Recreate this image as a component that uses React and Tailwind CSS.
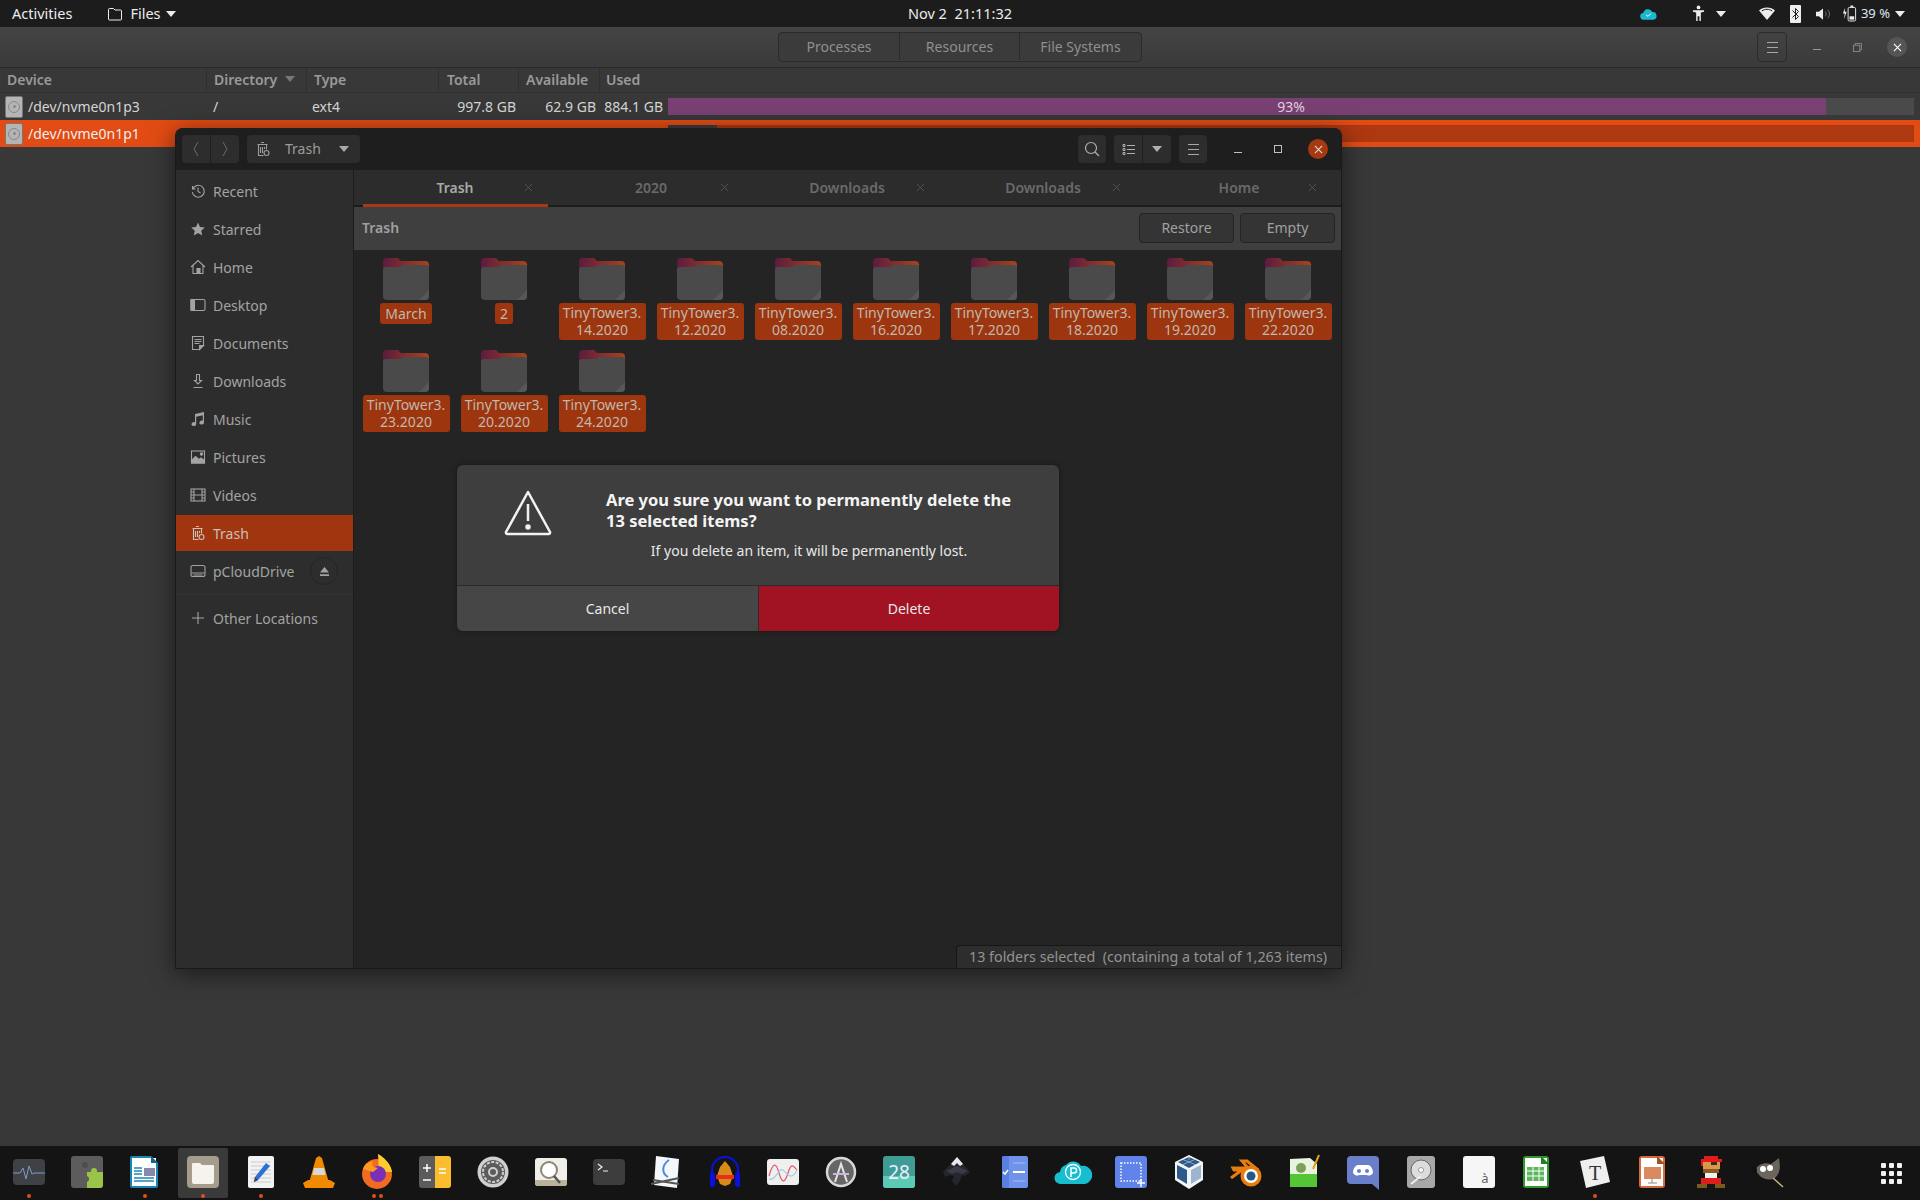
import { Fragment } from "react";

const tabs = ["Trash", "2020", "Downloads", "Downloads", "Home"];

const folders = [
  ["March"],
  ["2"],
  ["TinyTower3.", "14.2020"],
  ["TinyTower3.", "12.2020"],
  ["TinyTower3.", "08.2020"],
  ["TinyTower3.", "16.2020"],
  ["TinyTower3.", "17.2020"],
  ["TinyTower3.", "18.2020"],
  ["TinyTower3.", "19.2020"],
  ["TinyTower3.", "22.2020"],
  ["TinyTower3.", "23.2020"],
  ["TinyTower3.", "20.2020"],
  ["TinyTower3.", "24.2020"],
];

// small 16px symbolic icon
const Sym = ({ children, className = "", fill = "none" }) => (
  <svg
    viewBox="0 0 16 16"
    fill={fill}
    stroke={fill === "none" ? "currentColor" : "none"}
    strokeWidth="1.1"
    className={`w-4 h-4 shrink-0 ${className}`}
  >
    {children}
  </svg>
);

const TrashIcon = ({ className }) => (
  <Sym className={className}>
    <path d="M6 1.500h3M2.500 3.500h10M3.500 3.500v11h5M11.500 3.500v5M5.500 6v6M7.500 6v6M9.500 6v2" />
    <circle cx="11.500" cy="12" r="2.500" />
  </Sym>
);

const sidebarItems = [
  { label: "Recent", icon: <Sym><path d="M2.500 3v3h3M2.700 6a6 6 0 1 1-.4 3" /><path d="M8 4.500V8.500l2.500 1.500" /></Sym> },
  { label: "Starred", icon: <Sym fill="currentColor"><path d="M8 1.500l2 4.500 4.800.5-3.600 3.200 1 4.800L8 12l-4.200 2.500 1-4.800L1.200 6.500 6 6z" /></Sym> },
  { label: "Home", icon: <Sym><path d="M1 8l7-6.500L15 8M3 6.500V14.500h10V6.500" /><path d="M7 14.500V9.500h3v5" fill="currentColor" /></Sym> },
  { label: "Desktop", icon: <Sym><rect x="1" y="2.500" width="14" height="11" rx="1.500" /><rect x="1" y="2.500" width="3.500" height="11" fill="currentColor" /></Sym> },
  { label: "Documents", icon: <Sym><path d="M2.500 1.500h11v9l-4 4h-7zM4.500 4.500h7M4.500 6.500h7M4.500 8.500h5" /><path d="M9.500 14.500v-4h4z" fill="currentColor" /></Sym> },
  { label: "Downloads", icon: <Sym><path d="M6.500 1.500h3v6h2L8 11 4.500 7.500h2zM3.500 14.500h9" /></Sym> },
  { label: "Music", icon: <Sym fill="currentColor"><path d="M5 3l9-2v10.500a2.300 2 0 1 1-1.200-1.700V4.300L6.200 5.700V13a2.300 2 0 1 1-1.200-1.700z" /></Sym> },
  { label: "Pictures", icon: <Sym><rect x="1.500" y="2" width="13" height="12" /><path d="M1.500 14V11.500l4-4 3.500 3 2-1.500 3.500 2.500V14z" fill="currentColor" /><circle cx="11.500" cy="5" r="1.200" fill="currentColor" /></Sym> },
  { label: "Videos", icon: <Sym><rect x="1" y="2" width="14" height="12" /><path d="M4 2v12M12 2v12M1 5h3M1 8h3M1 11h3M12 5h3M12 8h3M12 11h3M4 8h8" /></Sym> },
  { label: "Trash", active: true, icon: <TrashIcon /> },
  { label: "pCloudDrive", eject: true, icon: <Sym><rect x="1" y="2.500" width="14" height="11" rx="2" /><path d="M1.500 10h13M3.500 12h9" /></Sym> },
];

const Icon32 = ({ children, className = "" }) => (
  <svg viewBox="0 0 32 32" className={`w-8 h-8 ${className}`}>
    {children}
  </svg>
);

const dockIcons = [
  { dots: 1, svg: <><rect x="0" y="3" width="32" height="26" rx="4" fill="#3f4145" /><path d="M0 17h7l3-5 3 11 3-13 3 8 2-1h11" fill="none" stroke="#7f9cc9" strokeWidth="1" /></> },
  { dots: 0, svg: <><rect x="0" width="32" height="32" rx="3" fill="#5c5c5c" /><path d="M16 16h16v13a3 3 0 0 1-3 3H16z" fill="#9ac34a" /><circle cx="23" cy="15" r="3" fill="#9ac34a" /><circle cx="15" cy="23" r="3" fill="#5c5c5c" /><circle cx="14" cy="9" r="3" fill="#4d4d4d" /></> },
  { dots: 1, svg: <><path d="M3 0h19l7 7v23a2 2 0 0 1-2 2H3a2 2 0 0 1-2-2V2a2 2 0 0 1 2-2z" fill="#1a86b8" /><rect x="3" y="2" width="24" height="28" fill="#fff" /><path d="M22 0l7 7h-7z" fill="#14658c" /><rect x="15" y="12" width="11" height="8" fill="#88a" /><path d="M5 12h8M5 15h8M5 18h8M5 22h20M5 25h20" stroke="#1a86b8" strokeWidth="1.500" /></> },
  { dots: 1, active: true, svg: <><rect width="32" height="32" rx="4" fill="#a59c8b" /><path d="M5 8a1 1 0 0 1 1-1h7l2 2h11a1 1 0 0 1 1 1v16a2 2 0 0 1-2 2H7a2 2 0 0 1-2-2z" fill="#f6f3ee" /></> },
  { dots: 1, svg: <><rect x="3" width="26" height="32" rx="2" fill="#f2f2f2" /><path d="M6 6h20M6 10h20M6 14h20M6 18h20M6 22h20M6 26h20" stroke="#ccc" /><path d="M9 26l1-5L21 7l4 3-12 14z" fill="#2e6fd8" /><path d="M9 26l1-5 3 3z" fill="#444" /></> },
  { dots: 0, svg: <><path d="M16 0l3 2 7 25H6L13 2z" fill="#f08a00" /><path d="M11 12h10l1.500 7h-13z" fill="#d8d8d8" /><path d="M0 27l5-3h22l5 3-2 5H2z" fill="#f08a00" /></> },
  { dots: 2, svg: <><circle cx="16" cy="18" r="15" fill="#f26b21" /><path d="M17-2c6 3 13 10 14 18H18z" fill="#ffcb2e" /><circle cx="17" cy="18" r="8" fill="#7b2fb8" /><path d="M2 13c2-6 7-8 10-7-2 3-1 5 5 6l-5 4z" fill="#ff9a1f" /></> },
  { dots: 0, svg: <><path d="M3 0h13v32H3a3 3 0 0 1-3-3V3a3 3 0 0 1 3-3z" fill="#5b5b5b" /><path d="M16 0h13a3 3 0 0 1 3 3v26a3 3 0 0 1-3 3H16z" fill="#fbbd2e" /><path d="M4 12h8M8 8v8M4 24h8M20 13h7M20 17h7" stroke="#fff" strokeWidth="1.500" /></> },
  { dots: 0, svg: <><circle cx="16" cy="16" r="15.500" fill="#cfcfcf" /><circle cx="16" cy="16" r="12" fill="#5b5b5b" /><circle cx="16" cy="16" r="10" fill="none" stroke="#cfcfcf" strokeWidth="2" strokeDasharray="3 1.500" /><circle cx="16" cy="16" r="4" fill="none" stroke="#cfcfcf" strokeWidth="2" /></> },
  { dots: 0, svg: <><rect y="2" width="32" height="28" rx="3" fill="#f0eee8" /><path d="M0 24h32v3a3 3 0 0 1-3 3H3a3 3 0 0 1-3-3z" fill="#b9b39d" /><circle cx="14" cy="14" r="8" fill="#fff" stroke="#8a8578" strokeWidth="2" /><path d="M19 20l6 7" stroke="#555" strokeWidth="2.500" /></> },
  { dots: 0, svg: <><rect y="3" width="32" height="26" rx="4" fill="#3d3d3d" /><path d="M5 8l4 3-4 3M10 15h5" fill="none" stroke="#eee" strokeWidth="1.200" /></> },
  { dots: 0, svg: <><path d="M5 0l23 3-2 29-23-3z" fill="#f3f6fa" /><path d="M18 4c-7 5-8 13-1 17" fill="none" stroke="#4b8bd6" strokeWidth="2" /><path d="M0 28l28-6M2 24l26 4" stroke="#555" strokeWidth="2" /></> },
  { dots: 0, svg: <><path d="M3 22V14a13 13 0 0 1 26 0v8" fill="none" stroke="#0a10e0" strokeWidth="2" /><rect x="1" y="16" width="5" height="15" rx="2.500" fill="#0a10e0" /><rect x="26" y="16" width="5" height="15" rx="2.500" fill="#0a10e0" /><path d="M8 20l3-9 5-6 5 6 3 9-3 8-5 2-5-2z" fill="#d98b1a" /><path d="M7 19h18v4H7z" fill="#e83018" /></> },
  { dots: 0, svg: <><rect y="3" width="32" height="26" rx="3" fill="#efefef" /><path d="M2 20c4-14 7-14 10-3s6 10 9 0 5-8 9-3" fill="none" stroke="#e25a6a" strokeWidth="1.200" /><path d="M2 23c6 3 10-12 14-9s8 12 14 0" fill="none" stroke="#a7cbe8" strokeWidth="1.200" /></> },
  { dots: 0, svg: <><circle cx="16" cy="16" r="14" fill="#666" stroke="#d8d8d8" strokeWidth="2.500" /><path d="M10 26l6-18 6 18M8 18h16" fill="none" stroke="#e4e4e4" strokeWidth="2" /><path d="M8 18h16" stroke="#c6a6d8" strokeWidth="1.500" /></> },
  { dots: 0, svg: <><rect width="32" height="32" rx="3" fill="#3f9c94" /><path d="M0 20h32v9a3 3 0 0 1-3 3H3a3 3 0 0 1-3-3z" fill="#5bc9b3" /><text x="16" y="23" textAnchor="middle" fontSize="19" fill="#eef" fontFamily="Noto Sans">28</text></> },
  { dots: 0, svg: <><path d="M16 1l13 15-5 4-3-1-2 6-4 5-4-5 2-5-4-1-5 2-2-5z" fill="#25252e" /><path d="M16 1l6 7-3 2-3-3-3 3-3-2z" fill="#e8e8f0" /><path d="M5 15l11-5 11 5-6 3-5-2-5 2z" fill="#3a3a48" /></> },
  { dots: 0, svg: <><rect x="3" width="26" height="32" rx="2" fill="#6f93ea" /><rect x="3" width="7" height="32" rx="2" fill="#5a7fe0" /><path d="M14 7h12M14 25h12" stroke="#97b0ef" strokeWidth="1.500" /><path d="M14 16h12" stroke="#fff" strokeWidth="2" /><path d="M4 16l2 2 3-4" fill="none" stroke="#fff" strokeWidth="1.500" /></> },
  { dots: 0, svg: <><path d="M4 28a6 6 0 0 1-1-12 8 8 0 0 1 6-7 9 9 0 0 1 15 1 7 7 0 0 1 4 18z" fill="#17bed0" /><circle cx="16" cy="16" r="7.500" fill="none" stroke="#fff" strokeWidth="1.300" /><path d="M14 21V12h3a2 2 0 0 1 0 5h-3" fill="none" stroke="#fff" strokeWidth="1.500" /></> },
  { dots: 0, svg: <><rect width="32" height="32" rx="3" fill="#5f83e8" /><rect x="6" y="7" width="20" height="18" fill="none" stroke="#fff" strokeWidth="1.500" strokeDasharray="1.500 1.500" /><path d="M26 23v8M22 27h8" stroke="#fff" strokeWidth="1.500" /></> },
  { dots: 0, svg: <><path d="M16-1l14 7v18l-14 9-14-9V6z" fill="#f2f5f8" /><path d="M16 1L27 6 16 12 5 6z" fill="#2d5a88" /><path d="M4 9l10 5v14L4 22z" fill="#2d5a88" /><path d="M18 14l10-5v13l-10 6z" fill="#9cb4cc" /><path d="M16-1v5M9 3l14 6M23 3L9 9" stroke="#c8d6e4" strokeWidth=".6" /></> },
  { dots: 0, svg: <><path d="M0 22l11-8H3l-1-2h15L11 5h5l11 9" fill="none" stroke="#e87d0d" strokeWidth="3" /><circle cx="20" cy="20" r="10.500" fill="#e87d0d" /><circle cx="20" cy="20" r="7" fill="#fff" /><circle cx="20" cy="20" r="4.500" fill="#265787" /></> },
  { dots: 0, svg: <><path d="M1 3l20-1 7 6v23H1z" fill="#e8f3e0" /><path d="M1 18h27v13H1z" fill="#54c535" /><circle cx="12" cy="12" r="5" fill="#7ca05a" /><path d="M24 13L30-1" stroke="#e0a020" strokeWidth="2" /></> },
  { dots: 0, svg: <><path d="M4 0h24a4 4 0 0 1 4 4v30l-7-6H4a4 4 0 0 1-4-4V4a4 4 0 0 1 4-4z" fill="#6a7fc9" /><path d="M6 17c0-5 3-8 5-8h10c2 0 5 3 5 8-2 3-5 3-6 2H12c-1 1-4 1-6-2z" fill="#fff" /><circle cx="12" cy="15" r="2" fill="#6a7fc9" /><circle cx="20" cy="15" r="2" fill="#6a7fc9" /></> },
  { dots: 0, svg: <><rect x="2" width="28" height="32" rx="3" fill="#a8a8a8" /><circle cx="16" cy="14" r="10" fill="#dcdcdc" stroke="#666" /><circle cx="16" cy="14" r="2.500" fill="#fff" stroke="#999" /><path d="M6 28l10-8" stroke="#eee" strokeWidth="2" /></> },
  { dots: 0, svg: <><rect width="32" height="32" rx="3" fill="#f6f6f6" /><text x="22" y="27" textAnchor="middle" fontSize="13" fill="#666" fontFamily="Noto Sans">à</text></> },
  { dots: 0, svg: <><rect x="2" width="26" height="32" rx="3" fill="#2b9b2b" /><rect x="4" y="2" width="22" height="28" fill="#fff" /><path d="M20 0l8 8h-8z" fill="#237d23" /><rect x="6" y="11" width="17" height="14" fill="#5cb85c" /><path d="M6 15h17M6 20h17M12 11v14M18 11v14" stroke="#fff" /></> },
  { dots: 1, svg: <><path d="M1 5l24-5 6 26-24 6z" fill="#efefef" /><text x="16" y="24" textAnchor="middle" fontSize="20" fill="#333" fontFamily="Liberation Serif">T</text></> },
  { dots: 0, svg: <><rect x="2" width="26" height="32" rx="3" fill="#d8693b" /><rect x="4" y="2" width="22" height="28" fill="#fff" /><path d="M20 0l8 8h-8z" fill="#a84e22" /><rect x="7" y="11" width="17" height="12" fill="#d98a5e" /><path d="M15 23v4M11 27h9" stroke="#888" /></> },
  { dots: 0, svg: <><path d="M9 0h14v3h4v3H8v4H6V3h3z" fill="#e01c1c" /><path d="M8 6h17v7H8z" fill="#d79a4a" /><path d="M16 6h6v3h-6z" fill="#4a2a10" /><path d="M8 13h16v4H8z" fill="#8a5a20" /><path d="M10 17h12v5H10z" fill="#f0f0f0" /><path d="M6 22h20v6H6z" fill="#e01c1c" /><path d="M2 28h10v4H2zM20 28h10v4H20z" fill="#7a5a1e" /></> },
  { dots: 0, svg: <><path d="M2 14c3-6 10-8 16-6l8-6c1 6 2 14-3 19-4 4-12 3-16-1z" fill="#6a665c" /><circle cx="10" cy="13" r="3" fill="#fff" /><circle cx="17" cy="12" r="3" fill="#fff" /><circle cx="1" cy="14" r="3" fill="#111" /><path d="M20 22l10 9" stroke="#c9b27a" strokeWidth="1.500" /></> },
];

const FolderIcon = () => (
  <svg viewBox="0 0 46 42" className="w-[46px] h-[42px]">
    <defs>
      <linearGradient id="folderTab" x1="0" x2="1" y1="0" y2="0">
        <stop offset="0" stopColor="#5d1b3f" />
        <stop offset="1" stopColor="#a8431c" />
      </linearGradient>
    </defs>
    <path d="M0 4a4 4 0 0 1 4-4h11l3 3h24a4 4 0 0 1 4 4v8H0z" fill="url(#folderTab)" />
    <path d="M0 12a3 3 0 0 1 3-3h14l3-2h23a3 3 0 0 1 3 3v28a4 4 0 0 1-4 4H4a4 4 0 0 1-4-4z" fill="#4a4a4a" />
    <path d="M36 42l10-10v6a4 4 0 0 1-4 4z" fill="#575757" />
  </svg>
);

const Caret = ({ className = "" }) => (
  <svg viewBox="0 0 10 6" fill="currentColor" className={`w-[10px] h-[6px] shrink-0 ${className}`}>
    <path d="M0 0h10L5 6z" />
  </svg>
);

const TopBar = () => (
  <div className="h-[27px] bg-[#1c1c1c] grid grid-cols-[1fr_auto_1fr] items-center text-[14.500px] text-[#ececec]">
    <div className="flex items-center pl-3">
      <span>Activities</span>
      <svg viewBox="0 0 16 16" fill="none" stroke="currentColor" className="w-4 h-4 ml-[35px]">
        <path d="M1.500 3.500a1 1 0 0 1 1-1h4l1.500 1.500h5.500a1 1 0 0 1 1 1v8a1 1 0 0 1-1 1h-11a1 1 0 0 1-1-1z" />
      </svg>
      <span className="ml-[7px]">Files</span>
      <Caret className="ml-[5px] text-[#ececec]" />
    </div>
    <div>Nov 2&nbsp; 21:11:32</div>
    <div className="flex items-center justify-end h-full">
      <svg viewBox="0 0 18 12" className="w-[17px] h-[12px]">
        <path d="M4 12a3.500 3.500 0 0 1-.5-7A5 5 0 0 1 13 4a4 4 0 0 1 1 8z" fill="#1cb8d0" />
        <path d="M6.500 7l2 1.500L11.500 5.500" stroke="#fff" fill="none" />
      </svg>
      <svg viewBox="0 0 14 18" fill="#eee" className="w-[13px] h-[17px] ml-[35px]">
        <circle cx="7" cy="2.500" r="2" />
        <path d="M1 5.500h12v1.500L9.500 8v9H8v-5H6v5H4.500V8L1 7z" />
      </svg>
      <Caret className="ml-[11px] text-[#ececec]" />
      <svg viewBox="0 0 16 14" className="w-[16px] h-[14px] ml-[33px]">
        <path d="M0 3.500C4-.5 12-.5 16 3.500L8 13z" fill="#eee" />
        <path d="M2.800 4C6 1.700 10 1.700 13.200 4" stroke="#1c1c1c" fill="none" />
      </svg>
      <svg viewBox="0 0 11 18" className="w-[11px] h-[18px] ml-[15px]">
        <rect width="11" height="18" rx="1" fill="#eee" />
        <path d="M2.500 5.500l6 6-3 3v-11l3 3-6 6" stroke="#1c1c1c" fill="none" />
      </svg>
      <svg viewBox="0 0 16 14" className="w-[15px] h-[14px] ml-[15px]">
        <path d="M0 4.500h3L7.500 1v12L3 9.500H0z" fill="#eee" />
        <path d="M10 4.500a4 4 0 0 1 0 5M12.500 2.500a7 7 0 0 1 0 9" fill="none" stroke="#777" />
      </svg>
      <svg viewBox="0 0 16 18" className="w-[15px] h-[17px] ml-[11px]">
        <path d="M3 3L1 9h2l-1 6 3-8H3z" fill="#eee" />
        <rect x="6.500" y="2.500" width="8" height="14.500" rx="1.500" fill="none" stroke="#eee" />
        <rect x="9" y="0.500" width="3" height="2" fill="#eee" />
        <rect x="8" y="12" width="5" height="3.500" fill="#eee" />
      </svg>
      <span className="ml-[4px] text-[13px] text-[#dfe8f0]">39 %</span>
      <Caret className="ml-[5px] mr-[15px] text-[#ececec]" />
    </div>
  </div>
);

const MenuLines = () => (
  <div className="flex flex-col gap-[4px] w-[11px]">
    <div className="h-px bg-[#a8a8a8]" />
    <div className="h-px bg-[#a8a8a8]" />
    <div className="h-px bg-[#a8a8a8]" />
  </div>
);

const CloseX = ({ className = "" }) => (
  <svg viewBox="0 0 10 10" stroke="currentColor" strokeWidth="1.200" className={`w-[9px] h-[9px] ${className}`}>
    <path d="M1 1l8 8M9 1l-8 8" />
  </svg>
);

const HeaderBar = () => (
  <div className="h-[41px] bg-gradient-to-b from-[#444444] to-[#3a3a3a] border-b border-[#2a2a2a] grid grid-cols-[1fr_auto_1fr] items-center text-[14px] text-[#8f8f8f]">
    <div />
    <div className="flex h-[30px] border border-[#2b2b2b] rounded-[4px] bg-[#3b3b3b] pb-px">
      <div className="w-[121px] flex items-center justify-center border-r border-[#2b2b2b]">Processes</div>
      <div className="w-[120px] flex items-center justify-center border-r border-[#2b2b2b]">Resources</div>
      <div className="w-[121px] flex items-center justify-center">File Systems</div>
    </div>
    <div className="flex items-center justify-end h-full">
      <div className="w-[30px] h-[30px] border border-[#2b2b2b] rounded-[4px] flex items-center justify-center">
        <MenuLines />
      </div>
      <div className="w-[8px] h-px bg-[#999] ml-[26px] mt-[5px]" />
      <svg viewBox="0 0 10 10" fill="none" stroke="#8a8a8a" className="w-[9px] h-[9px] ml-[32px]">
        <path d="M2.500 2.500V.5h7v7h-2" />
        <rect x=".5" y="2.500" width="7" height="7" />
      </svg>
      <div className="w-5 h-5 rounded-full bg-[#555] ml-[25px] mr-[13px] flex items-center justify-center">
        <CloseX className="text-white" />
      </div>
    </div>
  </div>
);

const DiskIcon = () => (
  <div className="w-[18px] h-[22px] rounded-[2px] bg-[#b5b5b5] border border-[#777] flex items-center justify-center shrink-0">
    <div className="w-3 h-3 rounded-full border border-[#888] flex items-center justify-center">
      <div className="w-[3px] h-[3px] rounded-full bg-[#888]" />
    </div>
  </div>
);

const tableCols = "grid grid-cols-[207px_100px_132px_80px_81px_68px_1fr]";

const Table = () => (
  <div className="text-[14px]">
    <div className={`${tableCols} h-[25px] items-center font-semibold text-[#9a9a9a] border-b border-[#2f2f2f]`}>
      <div className="pl-[7px] pb-[2px] border-r border-[#2f2f2f] h-full flex items-center">Device</div>
      <div className="pl-[7px] pb-[2px] border-r border-[#2f2f2f] h-full flex items-center">
        Directory
        <Caret className="ml-2 w-[9px] text-[#777]" />
      </div>
      <div className="pl-[7px] pb-[2px] border-r border-[#2f2f2f] h-full flex items-center">Type</div>
      <div className="pl-[8px] pb-[2px] border-r border-[#2f2f2f] h-full flex items-center">Total</div>
      <div className="pl-[7px] pb-[2px] border-r border-[#2f2f2f] h-full flex items-center">Available</div>
      <div className="pl-[6px] pb-[2px] h-full flex items-center col-span-2">Used</div>
    </div>
    <div className={`${tableCols} h-[27px] items-center text-[#d4d4d4]`}>
      <div className="pl-[5px] flex items-center gap-[5px]"><DiskIcon />/dev/nvme0n1p3</div>
      <div className="pl-[6px]">/</div>
      <div className="pl-[5px]">ext4</div>
      <div className="text-right pr-[3px]">997.8 GB</div>
      <div className="text-right pr-[4px]">62.9 GB</div>
      <div className="text-right pr-[5px]">884.1 GB</div>
      <div className="mr-[6px] h-[17px] bg-[#4a4a4a] relative flex items-center justify-center text-[14px] text-[#e0d0e0]">
        <div className="absolute left-0 top-0 bottom-0 w-[92.900%] bg-[#7a4074]" />
        <span className="relative">93%</span>
      </div>
    </div>
    <div className={`${tableCols} h-[27px] items-center text-[#eeeeee] bg-[#e24c14]`}>
      <div className="pl-[5px] flex items-center gap-[5px]"><DiskIcon />/dev/nvme0n1p1</div>
      <div />
      <div />
      <div />
      <div />
      <div />
      <div className="mr-[6px] h-[17px] bg-[#ae3810] relative">
        <div className="absolute left-0 top-0 bottom-0 w-[49px] bg-[#3d3d3d]" />
      </div>
    </div>
  </div>
);

const Sidebar = () => (
  <div className="w-[179px] -ml-px shrink-0 bg-[#2d2d2d] border-r border-[#1c1c1c] flex flex-col gap-[2px] pt-[3px] text-[14px] text-[#a3a3a3]">
    {sidebarItems.map((item) => (
      <div
        key={item.label}
        className={`h-9 flex items-center pl-[15px] gap-[7px] ${item.active ? "bg-[#a0350f] text-[#c9c0b8]" : ""}`}
      >
        {item.icon}
        <span>{item.label}</span>
        {item.eject && (
          <div className="ml-auto mr-[15px] w-7 h-7 rounded-full border border-[#252525] flex items-center justify-center">
            <svg viewBox="0 0 10 10" fill="#a3a3a3" className="w-[9px] h-[9px]">
              <path d="M5 0l5 6H0zM0 8h10v2H0z" />
            </svg>
          </div>
        )}
      </div>
    ))}
    <div className="h-px bg-[#333] mt-[3px]" />
    <div className="h-9 flex items-center pl-[15px] gap-[7px] mt-[3px]">
      <Sym>
        <path d="M8 2v12M2 8h12" />
      </Sym>
      <span>Other Locations</span>
    </div>
  </div>
);

const FilesWindow = () => (
  <div className="absolute left-[175px] top-[128px] w-[1167px] h-[841px] rounded-t-[8px] overflow-hidden flex flex-col bg-[#242424] border-x border-b border-[#1a1a1a] shadow-[0_4px_24px_rgba(0,0,0,0.55)]">
    {/* title bar */}
    <div className="h-[42px] shrink-0 bg-[#1e1e1e] flex items-center pl-[6px] text-[14px] text-[#9c9c9c]">
      <div className="flex h-7 w-[57px] rounded-[4px] bg-[#2d2d2d]">
        <div className="flex-1 flex items-center justify-center border-r border-[#1e1e1e]">
          <svg viewBox="0 0 8 16" fill="none" stroke="#6a6a6a" className="w-2 h-4"><path d="M6 1L2 8l4 7" /></svg>
        </div>
        <div className="flex-1 flex items-center justify-center">
          <svg viewBox="0 0 8 16" fill="none" stroke="#6a6a6a" className="w-2 h-4"><path d="M2 1l4 7-4 7" /></svg>
        </div>
      </div>
      <div className="flex items-center h-7 w-[113px] ml-2 rounded-[4px] bg-[#2d2d2d] pl-2 pb-px">
        <TrashIcon />
        <span className="ml-[14px]">Trash</span>
        <Caret className="ml-[18px] text-[#aaa]" />
      </div>
      <div className="ml-auto flex items-center">
        <div className="w-7 h-7 rounded-[4px] bg-[#2d2d2d] flex items-center justify-center">
          <svg viewBox="0 0 16 16" fill="none" stroke="#b0b0b0" strokeWidth="1.200" className="w-4 h-4">
            <circle cx="7" cy="7" r="5.500" />
            <path d="M11 11l4 4" />
          </svg>
        </div>
        <div className="flex w-[57px] h-7 rounded-[4px] bg-[#2d2d2d] ml-2">
          <div className="w-[29px] flex items-center justify-center border-r border-[#1e1e1e]">
            <svg viewBox="0 0 13 13" fill="none" stroke="#b0b0b0" className="w-[13px] h-[13px]">
              <path d="M1 1.500h2v2H1zM1 5.500h2v2H1zM1 9.500h2v2H1zM5 2.500h8M5 6.500h8M5 10.500h8" />
            </svg>
          </div>
          <div className="flex-1 flex items-center justify-center">
            <Caret className="text-[#b0b0b0]" />
          </div>
        </div>
        <div className="w-7 h-7 rounded-[4px] bg-[#2d2d2d] ml-2 flex items-center justify-center">
          <MenuLines />
        </div>
        <div className="w-2 h-px bg-[#c0c0c0] ml-[27px] mt-[6px]" />
        <div className="w-2 h-2 border border-[#c0c0c0] ml-[32px]" />
        <div className="w-5 h-5 rounded-full bg-[#a53a12] ml-[26px] mr-[13px] flex items-center justify-center">
          <CloseX className="text-[#e8d8d0]" />
        </div>
      </div>
    </div>

    <div className="flex flex-1 min-h-0">
      <Sidebar />
      <div className="flex-1 flex flex-col min-w-0 relative">
        {/* tabs */}
        <div className="h-[37px] shrink-0 bg-[#2c2c2c] border-b-2 border-[#1c1c1c] flex pl-[3px] text-[14px] font-semibold text-[#6a6a6a]">
          {tabs.map((tab, i) => (
            <div key={i} className="w-[196px] relative flex items-center justify-center pb-px">
              <span className={i === 0 ? "text-[#a8a8a8]" : ""}>{tab}</span>
              <svg viewBox="0 0 10 10" stroke="#555" className="absolute right-[20px] top-[13px] w-[9px] h-[9px]">
                <path d="M1 1l8 8M9 1l-8 8" />
              </svg>
              {i === 0 && <div className="absolute left-[6px] right-[5px] bottom-[-2px] h-[3px] bg-[#a53a12]" />}
            </div>
          ))}
        </div>
        {/* path bar */}
        <div className="h-[43px] shrink-0 bg-[#3f3f3f] flex items-center pl-[8px] pr-[6px] pb-[2px] text-[14px] text-[#a0a0a0]">
          <span className="font-semibold">Trash</span>
          <div className="ml-auto w-[95px] h-[30px] rounded-[4px] border border-[#232323] bg-[#343434] flex items-center justify-center pb-px">Restore</div>
          <div className="ml-[6px] w-[95px] h-[30px] rounded-[4px] border border-[#232323] bg-[#343434] flex items-center justify-center pb-px">Empty</div>
        </div>
        {/* icon grid */}
        <div className="flex-1 grid grid-cols-[repeat(10,98px)] auto-rows-[92px] content-start pl-[3px] pt-2 text-[14px] leading-[17px] text-[#c2b7ac]">
          {folders.map((lines, i) => (
            <div key={i} className="flex flex-col items-center">
              <FolderIcon />
              <div className={`mt-[3px] rounded-[3px] bg-[#9d350e] text-center ${lines.length > 1 ? "w-[87px] pt-px pb-[2px]" : "px-[5px] py-[2px]"}`}>
                {lines.map((line) => (
                  <Fragment key={line}>
                    {line}
                    <br />
                  </Fragment>
                ))}
              </div>
            </div>
          ))}
        </div>
        {/* status */}
        <div className="absolute right-0 bottom-0 h-[23px] w-[385px] rounded-tl-[4px] border-l border-t border-[#161616] bg-[#2d2d2d] flex items-center pl-[12px] pb-px text-[14.300px] text-[#939393] whitespace-pre">
          13 folders selected  (containing a total of 1,263 items)
        </div>
      </div>
    </div>

    {/* confirmation dialog */}
    <div className="absolute left-[281px] top-[337px] w-[602px] h-[166px] rounded-[6px] overflow-hidden bg-[#3e3e3e] flex flex-col text-[14px] text-[#e8e8e8] shadow-[0_0_6px_rgba(0,0,0,0.4)]">
      <div className="h-[120px] flex">
        <svg viewBox="0 0 48 46" fill="none" stroke="#f2f2f2" strokeWidth="2.500" className="w-12 h-[46px] ml-[47px] mt-[25px]">
          <path d="M24 2L2 42a1.500 1.500 0 0 0 1.500 2h41a1.500 1.500 0 0 0 1.500-2z" strokeLinejoin="round" />
          <path d="M24 14v17" />
          <circle cx="24" cy="37" r="1.500" fill="#f2f2f2" />
        </svg>
        <div className="ml-[54px] pt-[24px] w-[420px]">
          <div className="text-[16.500px] leading-[21px] font-bold text-[#f4f4f4] whitespace-nowrap">
            Are you sure you want to permanently delete the
            <br />
            13 selected items?
          </div>
          <div className="mt-[9px] text-center w-[406px]">If you delete an item, it will be permanently lost.</div>
        </div>
      </div>
      <div className="flex-1 flex border-t border-[#2a2a2a]">
        <div className="w-[302px] bg-[#464646] border-r border-[#2a2a2a] flex items-center justify-center">Cancel</div>
        <div className="flex-1 bg-[#a11223] flex items-center justify-center">Delete</div>
      </div>
    </div>
  </div>
);

const Dock = () => (
  <div className="h-[54px] bg-[#141414] flex items-center shrink-0">
    {dockIcons.map((item, i) => (
      <div key={i} className="w-[58px] h-full relative flex items-center justify-center shrink-0 pb-[3px]">
        {item.active && <div className="absolute left-1 right-1 top-[2px] bottom-[2px] rounded-[2px] bg-[#3a3a3a]" />}
        <Icon32 className="relative overflow-visible">{item.svg}</Icon32>
        {item.dots > 0 && (
          <div className="absolute bottom-[2px] left-0 right-0 flex justify-center gap-[3px]">
            {Array.from({ length: item.dots }).map((_, d) => (
              <div key={d} className="w-1 h-1 rounded-full bg-[#e2501a]" />
            ))}
          </div>
        )}
      </div>
    ))}
    <div className="ml-auto mr-[18px] grid grid-cols-3 gap-[3px] gap-y-[3px]">
      {Array.from({ length: 9 }).map((_, i) => (
        <div key={i} className="w-[5px] h-[5px] rounded-[1px] bg-[#f0f0f0]" />
      ))}
    </div>
  </div>
);

export default function App() {
  return (
    <div className="relative w-[1920px] h-[1200px] overflow-hidden flex flex-col bg-[#383838] font-['Noto_Sans',sans-serif]">
      <TopBar />
      <HeaderBar />
      <Table />
      <div className="flex-1" />
      <Dock />
      <FilesWindow />
    </div>
  );
}
